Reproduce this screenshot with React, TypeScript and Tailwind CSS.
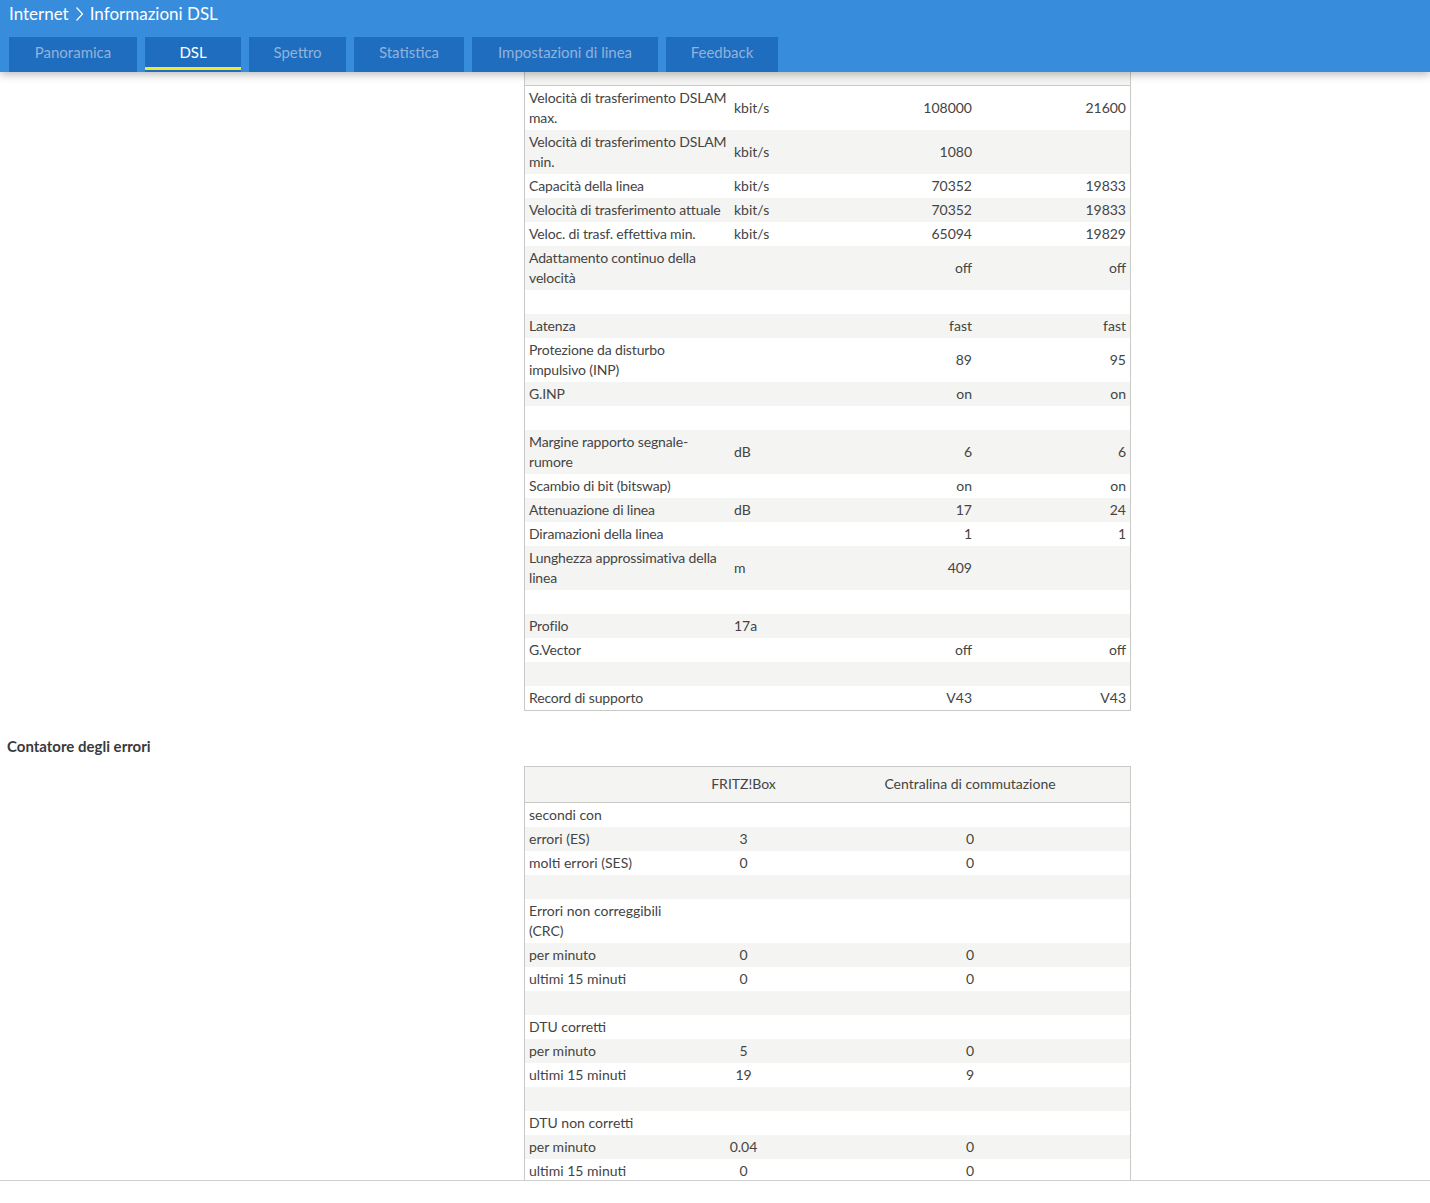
import React from 'react';

type Row = { label?: string; unit?: string; a?: string; b?: string };

// righe della tabella principale (null = riga vuota); \n = a capo come nell'originale
const dslRows: (Row | null)[] = [
  { label: 'Velocità di trasferimento DSLAM\nmax.', unit: 'kbit/s', a: '108000', b: '21600' },
  { label: 'Velocità di trasferimento DSLAM\nmin.', unit: 'kbit/s', a: '1080' },
  { label: 'Capacità della linea', unit: 'kbit/s', a: '70352', b: '19833' },
  { label: 'Velocità di trasferimento attuale', unit: 'kbit/s', a: '70352', b: '19833' },
  { label: 'Veloc. di trasf. effettiva min.', unit: 'kbit/s', a: '65094', b: '19829' },
  { label: 'Adattamento continuo della\nvelocità', a: 'off', b: 'off' },
  null,
  { label: 'Latenza', a: 'fast', b: 'fast' },
  { label: 'Protezione da disturbo\nimpulsivo (INP)', a: '89', b: '95' },
  { label: 'G.INP', a: 'on', b: 'on' },
  null,
  { label: 'Margine rapporto segnale-\nrumore', unit: 'dB', a: '6', b: '6' },
  { label: 'Scambio di bit (bitswap)', a: 'on', b: 'on' },
  { label: 'Attenuazione di linea', unit: 'dB', a: '17', b: '24' },
  { label: 'Diramazioni della linea', a: '1', b: '1' },
  { label: 'Lunghezza approssimativa della\nlinea', unit: 'm', a: '409' },
  null,
  { label: 'Profilo', unit: '17a' },
  { label: 'G.Vector', a: 'off', b: 'off' },
  null,
  { label: 'Record di supporto', a: 'V43', b: 'V43' },
];

const errRows: (Row | null)[] = [
  { label: 'secondi con' },
  { label: 'errori (ES)', a: '3', b: '0' },
  { label: 'molti errori (SES)', a: '0', b: '0' },
  null,
  { label: 'Errori non correggibili\n(CRC)' },
  { label: 'per minuto', a: '0', b: '0' },
  { label: 'ultimi 15 minuti', a: '0', b: '0' },
  null,
  { label: 'DTU corretti' },
  { label: 'per minuto', a: '5', b: '0' },
  { label: 'ultimi 15 minuti', a: '19', b: '9' },
  null,
  { label: 'DTU non corretti' },
  { label: 'per minuto', a: '0.04', b: '0' },
  { label: 'ultimi 15 minuti', a: '0', b: '0' },
];

const tabs = [
  { name: 'Panoramica', w: 'w-[128px]' },
  { name: 'DSL', w: 'w-[96px]', active: true },
  { name: 'Spettro', w: 'w-[97px]' },
  { name: 'Statistica', w: 'w-[110px]' },
  { name: 'Impostazioni di linea', w: 'w-[186px]' },
  { name: 'Feedback', w: 'w-[112px]' },
];

const cell = 'px-[4px] py-[2px] leading-[20px] align-middle';

export default function App() {
  return (
    <div
      className="flex h-[1203px] flex-col overflow-hidden bg-white text-[14px] text-[#444]"
      style={{ fontFamily: 'Lato, "Open Sans", sans-serif' }}
    >
      {/* intestazione */}
      <header className="relative z-10 h-[72px] shrink-0 bg-[#388cdc] shadow-[0_3px_8px_rgba(0,0,0,0.25)]">
        <div className="flex h-[28px] items-center gap-[6px] pl-[9px] text-[17px] text-white">
          <span>Internet</span>
          <svg width="9" height="16" viewBox="0 0 9 16" fill="none" stroke="white" strokeWidth="1.2">
            <path d="M1.5 1.5 L7.5 8 L1.5 14.5" />
          </svg>
          <span>Informazioni DSL</span>
        </div>
        <nav className="mt-[9px] flex gap-[8px] pl-[9px]">
          {tabs.map((t) => (
            <div
              key={t.name}
              className={`relative flex h-[35px] items-center justify-center pb-[4px] bg-[#1f6dbf] text-[15px] ${t.w} ${
                t.active ? 'text-white' : 'text-[#8fb3dc]'
              }`}
            >
              {t.name}
              {t.active && <span className="absolute bottom-[2px] left-0 right-0 h-[3px] bg-[#f0e82a]" />}
            </div>
          ))}
        </nav>
      </header>

      <main className="flex-1 overflow-hidden">
        <div className="ml-[524px] w-[607px] border-x border-b border-[#c9c9c5]">
          <div className="h-[14px] border-b border-[#c9c9c5] bg-[#f4f4f2]" />
          <table className="w-full table-fixed border-collapse">
            <colgroup>
              <col className="w-[206px]" />
              <col className="w-[90px]" />
              <col className="w-[155px]" />
              <col className="w-[154px]" />
            </colgroup>
            <tbody>
              {dslRows.map((r, i) => (
                <tr key={i} className={i % 2 === 1 ? 'bg-[#f4f4f2]' : 'bg-white'}>
                  {r ? (
                    <>
                      <td className={`${cell} whitespace-pre pr-0 tracking-[-0.15px]`}>{r.label}</td>
                      <td className={`${cell} pl-[3px]`}>{r.unit}</td>
                      <td className={`${cell} text-right`}>{r.a}</td>
                      <td className={`${cell} text-right`}>{r.b}</td>
                    </>
                  ) : (
                    <td colSpan={4} className="h-[24px]" />
                  )}
                </tr>
              ))}
            </tbody>
          </table>
        </div>

        <h2 className="mt-[25px] pl-[7px] text-[15px] font-bold leading-[20px] text-[#3a3a3a]">
          Contatore degli errori
        </h2>

        <div className="ml-[524px] mt-[10px] w-[607px] border border-[#c9c9c5]">
          <table className="w-full table-fixed border-collapse">
            <colgroup>
              <col className="w-[152px]" />
              <col className="w-[133px]" />
              <col className="w-[320px]" />
            </colgroup>
            <thead>
              <tr className="h-[35px] border-b border-[#c9c9c5] bg-[#f4f4f2]">
                <th className="font-normal" />
                <th className="pb-[2px] text-center font-normal">FRITZ!Box</th>
                <th className="pb-[2px] text-center font-normal">Centralina di commutazione</th>
              </tr>
            </thead>
            <tbody>
              {errRows.map((r, i) => (
                <tr key={i} className={i % 2 === 1 ? 'bg-[#f4f4f2]' : 'bg-white'}>
                  {r ? (
                    <>
                      <td className={`${cell} whitespace-pre`}>{r.label}</td>
                      <td className={`${cell} text-center`}>{r.a}</td>
                      <td className={`${cell} text-center`}>{r.b}</td>
                    </>
                  ) : (
                    <td colSpan={3} className="h-[24px]" />
                  )}
                </tr>
              ))}
            </tbody>
          </table>
        </div>
      </main>

      <footer className="h-[23px] shrink-0 border-t border-[#cfcfcf] bg-white" />
    </div>
  );
}
